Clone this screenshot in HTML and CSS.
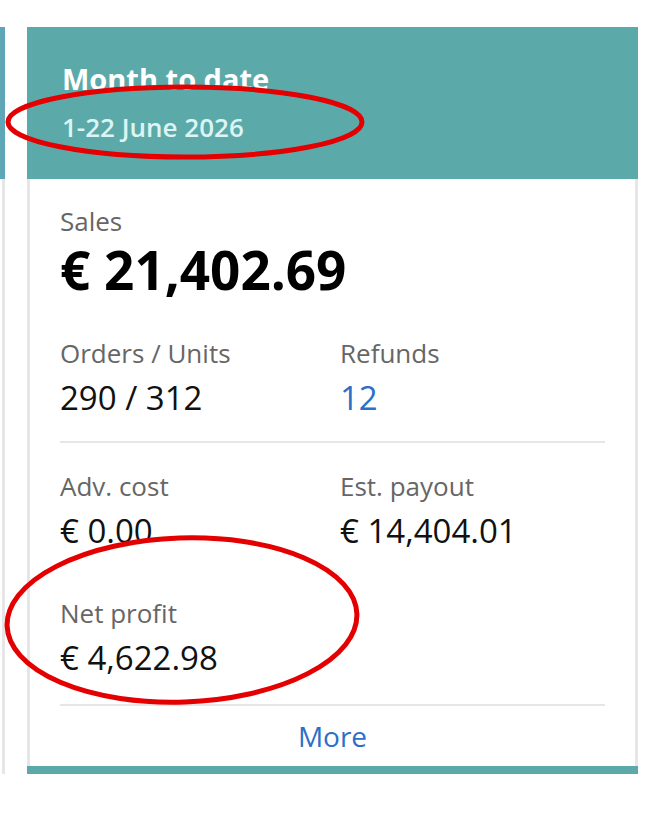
FILE: index.html
```html
<!DOCTYPE html>
<html lang="en">
<head>
<meta charset="utf-8">
<title>Month to date</title>
<link rel="stylesheet" href="styles.css">
</head>
<body>
<div class="page">
  <div class="prev-card">
    <div class="prev-head"></div>
    <div class="prev-body"></div>
  </div>
  <div class="card">
    <div class="card-head">
      <div class="title">Month to date</div>
      <div class="date">1-22 June 2026</div>
    </div>
    <div class="card-body">
      <div class="label">Sales</div>
      <div class="big">€ 21,402.69</div>
      <div class="grid g1">
        <div class="cell">
          <div class="label">Orders / Units</div>
          <div class="value">290 / 312</div>
        </div>
        <div class="cell">
          <div class="label">Refunds</div>
          <div class="value link">12</div>
        </div>
      </div>
      <div class="divider d1"></div>
      <div class="grid g2">
        <div class="cell">
          <div class="label">Adv. cost</div>
          <div class="value">€ 0.00</div>
        </div>
        <div class="cell">
          <div class="label">Est. payout</div>
          <div class="value">€ 14,404.01</div>
        </div>
        <div class="cell net">
          <div class="label">Net profit</div>
          <div class="value">€ 4,622.98</div>
        </div>
      </div>
      <div class="divider d2"></div>
      <div class="more">More</div>
    </div>
    <div class="card-foot"></div>
  </div>
  <svg class="marks" width="662" height="820" viewBox="0 0 662 820">
    <ellipse cx="185" cy="122" rx="177" ry="35" fill="none" stroke="#e40000" stroke-width="5"/>
    <ellipse cx="182" cy="620" rx="175" ry="82" fill="none" stroke="#e40000" stroke-width="5" transform="rotate(-2 182 620)"/>
  </svg>
</div>
</body>
</html>
```
FILE: styles.css
```css
html, body {
  margin: 0;
  padding: 0;
  background: #ffffff;
}
.page {
  position: relative;
  width: 662px;
  height: 820px;
  display: flex;
  align-items: flex-start;
  padding-top: 27px;
  box-sizing: border-box;
  font-family: "Open Sans", "Noto Sans", sans-serif;
}
.prev-card {
  width: 5px;
  display: flex;
  flex-direction: column;
}
.prev-head {
  height: 152px;
  background: #5ea6b5;
}
.prev-body {
  height: 595px;
  border-right: 3px solid #e6e6e6;
  width: 2px;
}
.card {
  margin-left: 22px;
  width: 611px;
  display: flex;
  flex-direction: column;
}
.card-head {
  background: #5baaa9;
  height: 152px;
  box-sizing: border-box;
  padding: 34px 0 0 35px;
}
.title {
  font-size: 29px;
  line-height: 36px;
  font-weight: 700;
  color: #ffffff;
}
.date {
  margin-top: 14px;
  font-size: 26px;
  line-height: 32px;
  font-weight: 600;
  color: #dcf5f4;
}
.card-body {
  border-left: 3px solid #e6e6e6;
  border-right: 3px solid #e6e6e6;
  padding: 25px 30px 12px 30px;
}
.label {
  font-size: 26px;
  line-height: 34px;
  color: #666666;
}
.big {
  font-size: 53px;
  line-height: 64px;
  font-weight: 700;
  color: #000000;
}
.grid {
  display: grid;
  grid-template-columns: 280px 1fr;
}
.g1 {
  margin-top: 34px;
}
.g2 {
  margin-top: 26px;
  row-gap: 44px;
}
.value {
  margin-top: 7px;
  font-size: 33px;
  line-height: 42px;
  color: #111111;
}
.link {
  color: #2b6fc8;
}
.divider {
  height: 2px;
  background: #e6e6e6;
}
.d1 {
  margin-top: 22px;
}
.d2 {
  margin-top: 25px;
}
.more {
  margin-top: 12px;
  text-align: center;
  font-size: 28px;
  line-height: 36px;
  color: #2b6fc8;
}
.card-foot {
  height: 8px;
  background: #5baaa9;
}
.marks {
  position: absolute;
  left: 0;
  top: 0;
  pointer-events: none;
}
```
